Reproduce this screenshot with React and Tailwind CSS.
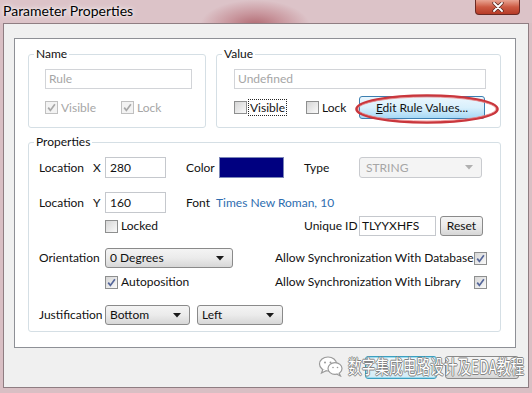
import React from "react";

function Check({ checked, disabled }) {
  return (
    <span
      className={
        disabled
          ? "w-[13px] h-[13px] shrink-0 flex items-center justify-center border border-[#c0c0c0] bg-[#f3f3f3]"
          : "w-[13px] h-[13px] shrink-0 flex items-center justify-center border border-[#8e8f8f] bg-linear-to-br from-[#d6d6d6] to-[#fafafa]"
      }
    >
      {checked && (
        <svg width="9" height="9" viewBox="0 0 9 9">
          <path
            d="M1.2 4.6 L3.4 7.4 L7.9 1.2"
            fill="none"
            stroke={disabled ? "#a8a8a8" : "#56679a"}
            strokeWidth="1.7"
          />
        </svg>
      )}
    </span>
  );
}

function Arrow({ grey }) {
  return (
    <svg width="8" height="5" viewBox="0 0 8 5" className="shrink-0">
      <path d="M0 0 H8 L4 4.5 Z" fill={grey ? "#b0b0b0" : "#1a1a1a"} />
    </svg>
  );
}

function Combo({ w, text }) {
  return (
    <div
      className={`${w} h-[20px] rounded-[3px] border border-[#8a8a8a] bg-linear-to-b from-[#f4f4f4] via-[#ebebeb] to-[#d7d7d7] flex items-center pl-[4px] pr-[8px] shrink-0`}
    >
      <span className="flex-1 leading-none">{text}</span>
      <Arrow />
    </div>
  );
}

export default function App() {
  return (
    <div className="relative w-[532px] h-[393px] overflow-hidden bg-[#d9bfc4] font-['Lato',sans-serif] text-[12px] text-[#111]">
      {/* title bar */}
      <div className="h-[23px] flex items-start bg-[radial-gradient(ellipse_55px_26px_at_255px_26px,#b06870_0%,#c9979e_50%,#dcc3c8_100%)]">
        <span className="ml-[3px] mt-[2px] text-[14px] leading-[18px] text-black [text-shadow:0_0_6px_#fff,0_0_3px_#fff]">
          Parameter Properties
        </span>
        <div className="ml-auto mr-[12px] w-[45px] h-[15px] rounded-b-[4px] border border-t-0 border-[#6a2a24] bg-linear-to-b from-[#e8a493] via-[#cc5a43] to-[#b63b27] flex items-center justify-center">
          <svg width="12" height="10" viewBox="0 0 12 10">
            <path d="M2 1 L10 9 M10 1 L2 9" stroke="#5a2a22" strokeWidth="3.4" strokeLinecap="round" />
            <path d="M2 1 L10 9 M10 1 L2 9" stroke="#ffffff" strokeWidth="1.8" strokeLinecap="round" />
          </svg>
        </div>
      </div>

      {/* client area */}
      <div className="ml-[3px] w-[526px] h-[365px] border border-[#8f7d82] bg-[#f0f0f0] flex flex-col pl-[10px] pt-[14px] pr-[9px]">
        {/* tab page panel */}
        <div className="w-[502px] h-[310px] border border-[#8e9096] bg-white flex flex-col pl-[13px] pt-[7px]">
          {/* top groups */}
          <div className="flex gap-[10px]">
            <fieldset className="w-[178px] h-[82px] border border-[#d5dfe5] rounded-[3px] p-0 m-0">
              <legend className="ml-[5px] px-[2px] leading-[16px]">Name</legend>
              <div className="pl-[16px] pt-[7px]">
                <div className="w-[147px] h-[20px] border border-[#d2d4d8] bg-white px-[3px] flex items-center text-[#a6a6a6]">
                  Rule
                </div>
                <div className="mt-[7px] h-[23px] flex items-center">
                  <div className="w-[76px] flex items-center">
                    <Check checked disabled />
                    <span className="ml-[3px] text-[#a6a6a6]">Visible</span>
                  </div>
                  <Check checked disabled />
                  <span className="ml-[3px] text-[#a6a6a6]">Lock</span>
                </div>
              </div>
            </fieldset>

            <fieldset className="relative w-[285px] h-[82px] border border-[#d5dfe5] rounded-[3px] p-0 m-0">
              <legend className="ml-[5px] px-[2px] leading-[16px]">Value</legend>
              <div className="pl-[17px] pt-[7px]">
                <div className="w-[252px] h-[20px] border border-[#d2d4d8] bg-white px-[3px] flex items-center text-[#a6a6a6]">
                  Undefined
                </div>
                <div className="mt-[7px] h-[23px] flex items-center">
                  <div className="w-[72px] flex items-center">
                    <Check />
                    <span className="ml-[1px] px-[1px] border border-dotted border-[#222] leading-[15px]">Visible</span>
                  </div>
                  <div className="w-[53px] flex items-center">
                    <Check />
                    <span className="ml-[3px]">Lock</span>
                  </div>
                  <div className="w-[126px] h-[23px] rounded-[3px] border border-[#3c7fb1] bg-linear-to-b from-[#eaf6fd] via-[#d9f0fc] to-[#a7d9f5] flex items-center justify-center">
                    <span>
                      <span className="underline">E</span>dit Rule Values...
                    </span>
                  </div>
                </div>
              </div>
              <svg className="absolute left-[137px] top-[31px]" width="146" height="32" viewBox="0 0 146 32">
                <ellipse cx="73" cy="16" rx="70.5" ry="13.5" fill="none" stroke="#c9363c" strokeWidth="2.6" />
                <ellipse cx="73" cy="16" rx="69" ry="12" fill="none" stroke="#e88a8c" strokeWidth="0.8" />
              </svg>
            </fieldset>
          </div>

          {/* properties */}
          <fieldset className="mt-[6px] w-[473px] h-[198px] border border-[#d5dfe5] rounded-[3px] p-0 m-0">
            <legend className="ml-[5px] px-[2px] leading-[16px]">Properties</legend>
            <div className="pl-[10px] pt-[7px] flex flex-col">
              {/* row 1 */}
              <div className="h-[21px] flex items-center">
                <span className="w-[66px] shrink-0">
                  Location<span className="ml-[9px]">X</span>
                </span>
                <div className="w-[61px] h-[21px] border border-[#c5c8cd] bg-white px-[4px] flex items-center shrink-0">280</div>
                <span className="ml-[20px] w-[33px] shrink-0">Color</span>
                <div className="w-[65px] h-[21px] bg-[#000080] border border-[#7b86b8] shrink-0"></div>
                <span className="ml-[20px] w-[55px] shrink-0">Type</span>
                <div className="w-[123px] h-[21px] rounded-[3px] border border-[#c9cbcf] bg-[#f4f4f4] flex items-center pl-[6px] pr-[8px] text-[#a6a6a6] shrink-0">
                  <span className="flex-1">STRING</span>
                  <Arrow grey />
                </div>
              </div>
              {/* row 2 */}
              <div className="mt-[14px] h-[21px] flex items-center">
                <span className="w-[66px] shrink-0">
                  Location<span className="ml-[9px]">Y</span>
                </span>
                <div className="w-[61px] h-[21px] border border-[#c5c8cd] bg-white px-[4px] flex items-center shrink-0">160</div>
                <span className="ml-[20px] w-[30px] shrink-0">Font</span>
                <span className="text-[#2e6db0]">Times New Roman, 10</span>
              </div>
              {/* row 3 */}
              <div className="mt-[3px] h-[20px] flex items-center">
                <span className="w-[66px] shrink-0"></span>
                <div className="w-[199px] flex items-center shrink-0">
                  <Check />
                  <span className="ml-[3px]">Locked</span>
                </div>
                <span className="w-[55px] shrink-0">Unique ID</span>
                <div className="w-[77px] h-[20px] border border-[#c5c8cd] bg-white px-[2px] flex items-center shrink-0">TLYYXHFS</div>
                <div className="ml-[4px] w-[43px] h-[20px] rounded-[3px] border border-[#8a8a8a] bg-linear-to-b from-[#f4f4f4] via-[#ebebeb] to-[#d6d6d6] flex items-center justify-center shrink-0">
                  Reset
                </div>
              </div>
              {/* row 4 */}
              <div className="mt-[12px] h-[20px] flex items-center">
                <span className="w-[66px] shrink-0">Orientation</span>
                <div className="w-[170px] shrink-0">
                  <Combo w="w-[128px]" text="0 Degrees" />
                </div>
                <div className="w-[212px] flex items-center justify-between shrink-0">
                  <span>Allow Synchronization With Database</span>
                  <Check checked />
                </div>
              </div>
              {/* row 5 */}
              <div className="mt-[7px] h-[14px] flex items-center">
                <span className="w-[66px] shrink-0"></span>
                <div className="w-[170px] flex items-center shrink-0">
                  <Check checked />
                  <span className="ml-[3px]">Autoposition</span>
                </div>
                <div className="w-[212px] flex items-center justify-between shrink-0">
                  <span>Allow Synchronization With Library</span>
                  <Check checked />
                </div>
              </div>
              {/* row 6 */}
              <div className="mt-[16px] h-[20px] flex items-center">
                <span className="w-[66px] shrink-0">Justification</span>
                <Combo w="w-[85px]" text="Bottom" />
                <div className="ml-[7px]">
                  <Combo w="w-[86px]" text="Left" />
                </div>
              </div>
            </div>
          </fieldset>
        </div>

        {/* buttons */}
        <div className="mt-[8px] flex justify-end gap-[8px]">
          <div className="w-[72px] h-[23px] rounded-[3px] border border-[#3c9fc0] bg-linear-to-b from-[#eef8fc] to-[#d3ecf6] shadow-[inset_0_0_0_1px_#9fdcef]"></div>
          <div className="w-[74px] h-[23px] rounded-[3px] border border-[#8a8a8a] bg-linear-to-b from-[#f4f4f4] via-[#ebebeb] to-[#d6d6d6]"></div>
        </div>
      </div>

      {/* watermark overlay */}
      <div className="absolute left-[318px] top-[355px] flex items-center pointer-events-none">
        <svg width="26" height="22" viewBox="0 0 26 22">
          <ellipse cx="10" cy="9" rx="8.5" ry="7" fill="#fff" stroke="#9a9a9a" strokeWidth="1.2" />
          <path d="M5 14 L3.5 18 L8.5 15.5" fill="#fff" stroke="#9a9a9a" strokeWidth="1.2" />
          <ellipse cx="17" cy="13.5" rx="7" ry="5.8" fill="#fff" stroke="#9a9a9a" strokeWidth="1.2" />
          <path d="M21 18 L22.5 21 L18.5 19" fill="#fff" stroke="#9a9a9a" strokeWidth="1.2" />
          <circle cx="7" cy="7.5" r="1" fill="#9a9a9a" />
          <circle cx="12.5" cy="7.5" r="1" fill="#9a9a9a" />
          <circle cx="15" cy="12.5" r="0.8" fill="#9a9a9a" />
          <circle cx="19.5" cy="12.5" r="0.8" fill="#9a9a9a" />
        </svg>
        <span className="ml-[4px] inline-block origin-left scale-x-[0.72] whitespace-nowrap text-[19px] leading-[22px] text-white font-['Noto_Sans_CJK_SC',sans-serif] [text-shadow:0_0_1px_#666,1px_0_0_#888,-1px_0_0_#888,0_1px_0_#888,0_-1px_0_#888]">
          数字集成电路设计及EDA教程
        </span>
      </div>
    </div>
  );
}
